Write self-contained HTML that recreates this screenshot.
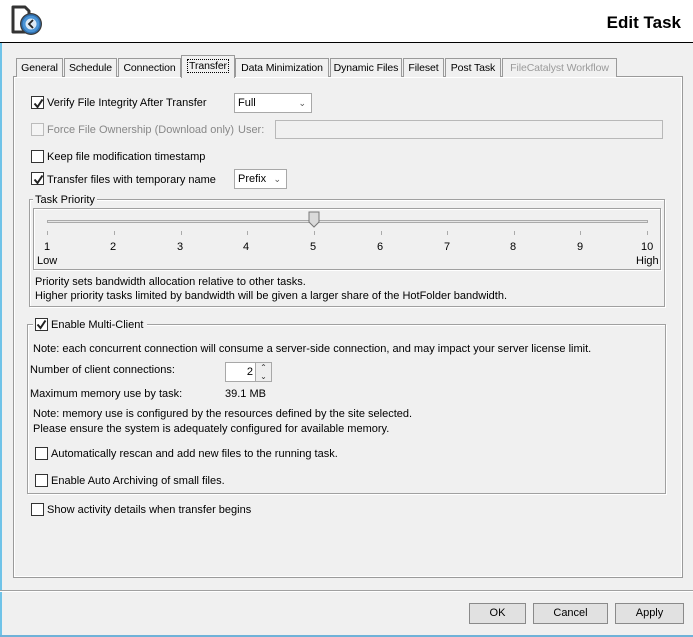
<!DOCTYPE html>
<html><head><meta charset="utf-8"><style>
*{margin:0;padding:0;box-sizing:border-box}
body{width:693px;height:637px;background:#f0f0f0;font-family:"Liberation Sans",sans-serif;font-size:11px;color:#000;position:relative;overflow:hidden}
.a{position:absolute;white-space:nowrap;line-height:13px;margin-top:1px}
.cb{position:absolute;width:13px;height:13px;border:1px solid #333;background:#fff}
.cb.dis{border-color:#bbb;background:#f4f4f4}
.cb svg{position:absolute;left:1px;top:1px}
.tab{position:absolute;top:58px;height:19px;border:1px solid #9a9a9a;border-bottom:none;background:#f0f0f0;text-align:center;line-height:19px;font-size:10.5px;letter-spacing:-0.1px}
.box{position:absolute;border:1px solid #a0a0a0;box-shadow:inset 1px 1px 0 #fff,1px 1px 0 #fff}
.legend{position:absolute;background:#f0f0f0;padding:0 2px;line-height:13px}
.combo{position:absolute;border:1px solid #a8a8a8;background:#fff;padding-left:3px;line-height:19px}
.btn{position:absolute;top:603px;height:21px;border:1px solid #8a8a8a;background:#e1e1e1;text-align:center;line-height:19px}
.tick{position:absolute;top:231px;width:1px;height:4px;background:#aaa}
</style></head><body>
<div style="position:absolute;left:0;top:0;width:693px;height:42px;background:#fff"></div>
<div style="position:absolute;left:0;top:42px;width:693px;height:1px;background:#000"></div>
<div style="position:absolute;left:0;top:43px;width:2px;height:594px;background:#6fc3e8"></div>
<div style="position:absolute;left:0;top:635px;width:693px;height:2px;background:#6fb2d8"></div>
<svg style="position:absolute;left:8px;top:4px" width="36" height="34" viewBox="0 0 36 34">
<path d="M5 3 H17 L21 7 V28 H5 Z" fill="#fff" stroke="#333" stroke-width="3" stroke-linejoin="round"/>
<circle cx="23" cy="20" r="11" fill="#3a3a3a"/>
<circle cx="23" cy="20" r="9" fill="#4a94d6" stroke="#2f6fae" stroke-width="1.5"/>
<circle cx="23" cy="20" r="5.5" fill="#dce9f5"/>
<path d="M25 16 L21 20 L25 24" fill="none" stroke="#222" stroke-width="1.8"/>
</svg>
<div class="a" style="right:12px;top:12px;font-size:17px;font-weight:bold;line-height:20px">Edit Task</div>
<div style="position:absolute;left:13px;top:76px;width:670px;height:502px;border:1px solid #9a9a9a;box-shadow:inset 1px 1px 0 #fff,inset -1px -1px 0 #fff"></div>
<div class="tab" style="left:16px;width:47px">General</div>
<div class="tab" style="left:64px;width:53px">Schedule</div>
<div class="tab" style="left:118px;width:63px">Connection</div>
<div class="tab" style="left:181px;top:55px;height:23px;width:54px;border-bottom:none;z-index:2;line-height:20px"><span style="outline:1px dotted #000;padding:0 1px">Transfer</span></div>
<div class="tab" style="left:235px;width:94px">Data Minimization</div>
<div class="tab" style="left:330px;width:72px">Dynamic Files</div>
<div class="tab" style="left:403px;width:41px">Fileset</div>
<div class="tab" style="left:445px;width:56px">Post Task</div>
<div class="tab" style="left:502px;width:115px;color:#9a9a9a">FileCatalyst Workflow</div>

<div class="cb" style="left:31px;top:96px"><svg width="11" height="11"><path d="M1.5 5.5 L4.5 9 L9.5 1.5" fill="none" stroke="#222" stroke-width="2"/></svg></div>
<div class="a" style="left:47px;top:96px">Verify File Integrity After Transfer</div>
<div class="combo" style="left:234px;top:93px;width:78px;height:20px">Full<span style="position:absolute;right:5px;top:0;font-size:9px;color:#555">&#8964;</span></div>

<div class="cb dis" style="left:31px;top:123px"></div>
<div class="a" style="left:47px;top:123px;color:#888">Force File Ownership (Download only)</div>
<div class="a" style="left:238px;top:123px;color:#888">User:</div>
<div style="position:absolute;left:275px;top:120px;width:388px;height:19px;border:1px solid #b8b8b8;background:#f0f0f0"></div>

<div class="cb" style="left:31px;top:150px"></div>
<div class="a" style="left:47px;top:150px">Keep file modification timestamp</div>

<div class="cb" style="left:31px;top:172px"><svg width="11" height="11"><path d="M1.5 5.5 L4.5 9 L9.5 1.5" fill="none" stroke="#222" stroke-width="2"/></svg></div>
<div class="a" style="left:47px;top:173px">Transfer files with temporary name</div>
<div class="combo" style="left:234px;top:169px;width:53px;height:20px">Prefix<span style="position:absolute;right:5px;top:0;font-size:9px;color:#555">&#8964;</span></div>

<div class="box" style="left:29px;top:199px;width:636px;height:108px"></div>
<div class="legend" style="left:33px;top:193px;margin-top:1px">Task Priority</div>
<div class="box" style="left:33px;top:208px;width:628px;height:62px"></div>
<div style="position:absolute;left:47px;top:220px;width:601px;height:3px;border:1px solid #aaa;background:#e6e6e6"></div>
<svg style="position:absolute;left:308px;top:211px" width="13" height="18"><path d="M1 1 H11 V11 L6 16 L1 11 Z" fill="#dadada" stroke="#777"/></svg>
<div class="tick" style="left:47px"></div><div class="tick" style="left:114px"></div><div class="tick" style="left:181px"></div><div class="tick" style="left:247px"></div><div class="tick" style="left:314px"></div><div class="tick" style="left:381px"></div><div class="tick" style="left:447px"></div><div class="tick" style="left:514px"></div><div class="tick" style="left:580px"></div><div class="tick" style="left:647px"></div>
<div class="a" style="left:44px;top:240px">1</div><div class="a" style="left:110px;top:240px">2</div><div class="a" style="left:177px;top:240px">3</div><div class="a" style="left:243px;top:240px">4</div><div class="a" style="left:310px;top:240px">5</div><div class="a" style="left:377px;top:240px">6</div><div class="a" style="left:444px;top:240px">7</div><div class="a" style="left:510px;top:240px">8</div><div class="a" style="left:577px;top:240px">9</div><div class="a" style="left:641px;top:240px">10</div>
<div class="a" style="left:37px;top:254px">Low</div>
<div class="a" style="left:636px;top:254px">High</div>
<div class="a" style="left:35px;top:275px">Priority sets bandwidth allocation relative to other tasks.</div>
<div class="a" style="left:35px;top:289px">Higher priority tasks limited by bandwidth will be given a larger share of the HotFolder bandwidth.</div>

<div class="box" style="left:27px;top:324px;width:639px;height:170px"></div>
<div class="legend" style="left:33px;top:317px;padding-left:2px;padding-right:4px;margin-top:1px"><span style="display:inline-block;width:13px;height:13px;border:1px solid #333;background:#fff;vertical-align:-3px;position:relative"><svg style="position:absolute;left:0;top:0" width="11" height="11"><path d="M1.5 5.5 L4.5 9 L9.5 1.5" fill="none" stroke="#222" stroke-width="2"/></svg></span> Enable Multi-Client</div>
<div class="a" style="left:33px;top:342px">Note: each concurrent connection will consume a server-side connection, and may impact your server license limit.</div>
<div class="a" style="left:30px;top:363px">Number of client connections:</div>
<div style="position:absolute;left:225px;top:362px;width:47px;height:20px;border:1px solid #a8a8a8;background:#fff"><span style="position:absolute;right:18px;top:3px">2</span><div style="position:absolute;right:0;top:0;width:16px;height:18px;background:#eee;border-left:1px solid #aaa;font-size:8px;line-height:9px;text-align:center;color:#333">&#8963;<br>&#8964;</div></div>
<div class="a" style="left:30px;top:387px">Maximum memory use by task:</div>
<div class="a" style="left:225px;top:387px">39.1 MB</div>
<div class="a" style="left:33px;top:407px">Note: memory use is configured by the resources defined by the site selected.</div>
<div class="a" style="left:33px;top:422px">Please ensure the system is adequately configured for available memory.</div>
<div class="cb" style="left:35px;top:447px"></div>
<div class="a" style="left:51px;top:447px">Automatically rescan and add new files to the running task.</div>
<div class="cb" style="left:35px;top:474px"></div>
<div class="a" style="left:51px;top:474px">Enable Auto Archiving of small files.</div>

<div class="cb" style="left:31px;top:503px"></div>
<div class="a" style="left:47px;top:503px">Show activity details when transfer begins</div>

<div style="position:absolute;left:0;top:590px;width:693px;height:1px;background:#a0a0a0"></div>
<div style="position:absolute;left:0;top:591px;width:693px;height:1px;background:#fff"></div>
<div class="btn" style="left:469px;width:57px">OK</div>
<div class="btn" style="left:533px;width:75px">Cancel</div>
<div class="btn" style="left:615px;width:69px">Apply</div>
</body></html>
